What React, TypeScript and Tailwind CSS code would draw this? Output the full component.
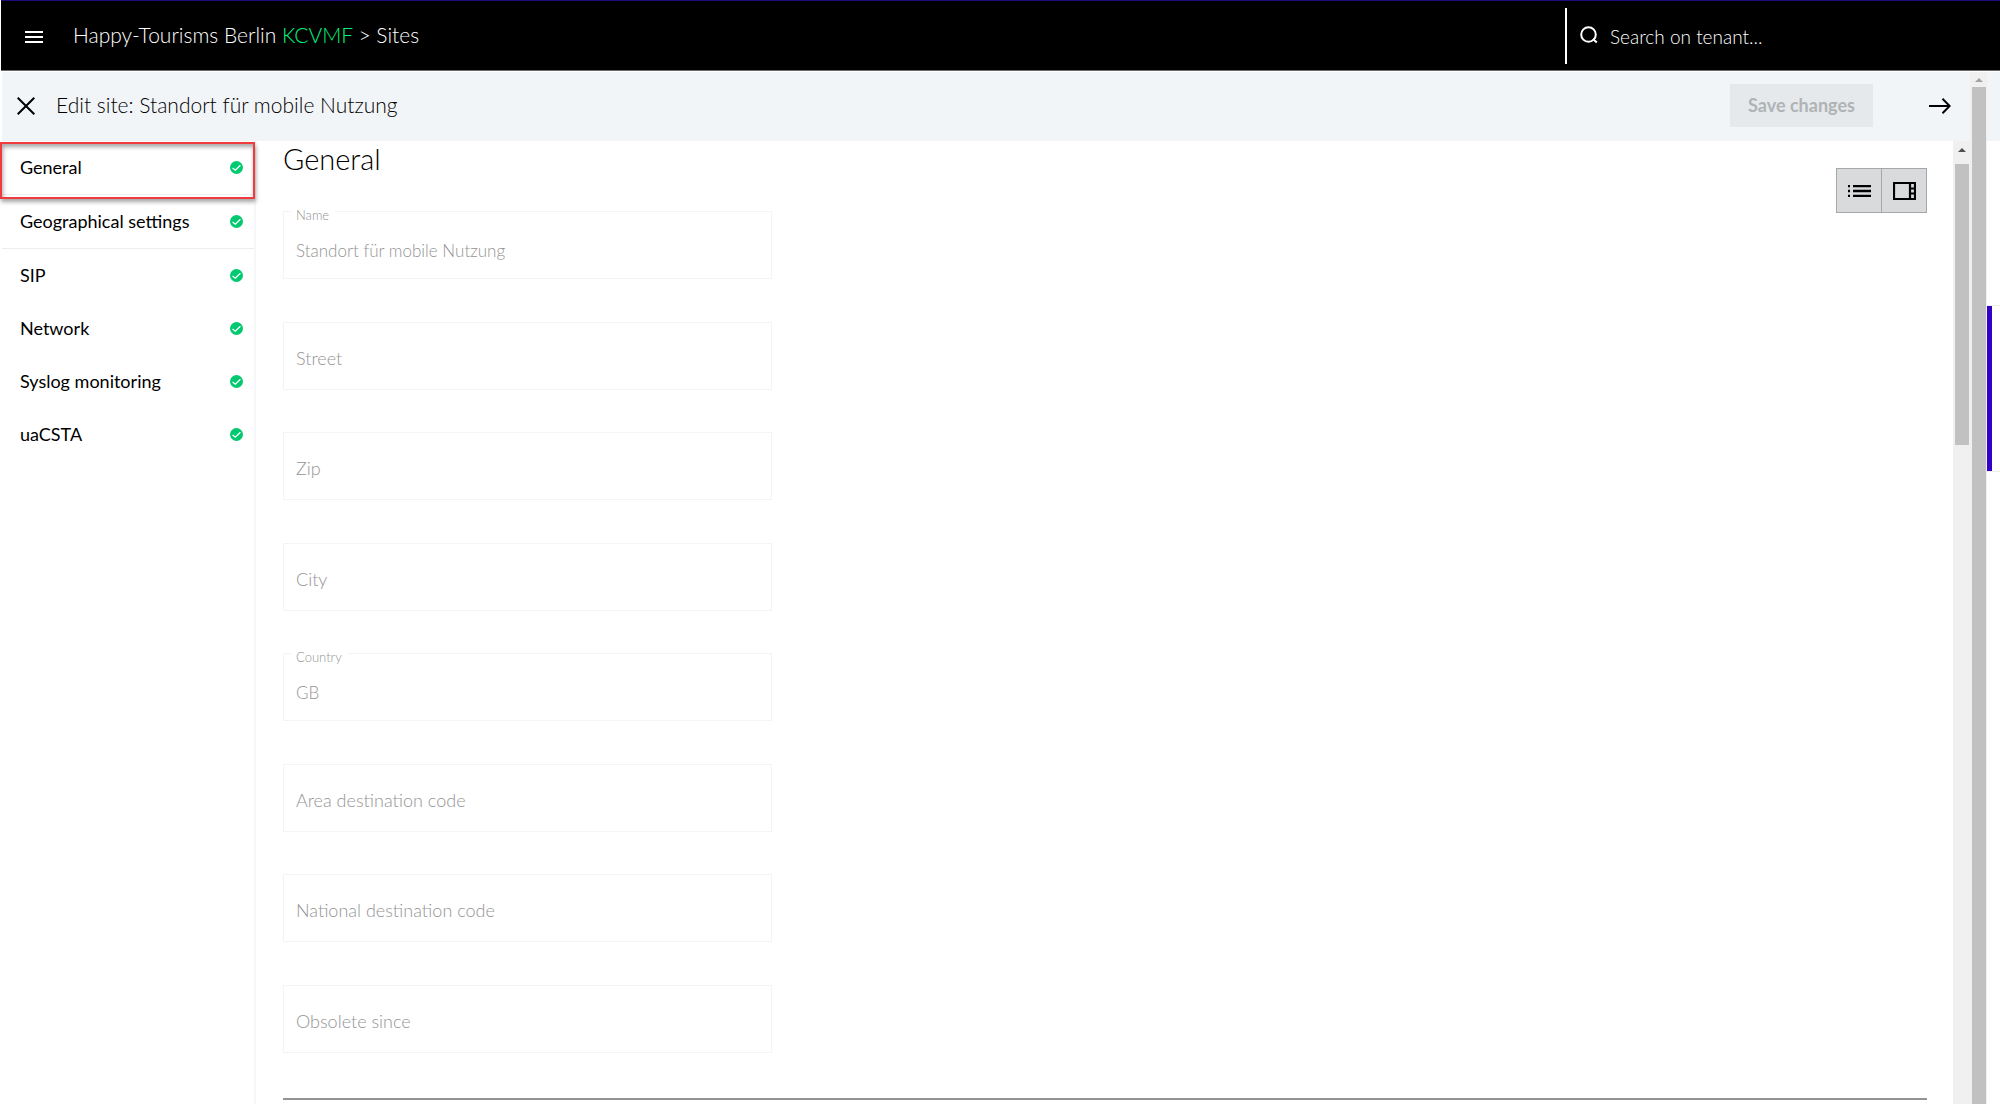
import React from "react";

const sections = [
  { label: "General", divided: true, active: true },
  { label: "Geographical settings", divided: true },
  { label: "SIP" },
  { label: "Network" },
  { label: "Syslog monitoring" },
  { label: "uaCSTA" },
];

const fields = [
  { id: "name", label: "Name", value: "Standort für mobile Nutzung" },
  { id: "street", label: "Street", value: "" },
  { id: "zip", label: "Zip", value: "" },
  { id: "city", label: "City", value: "" },
  { id: "country", label: "Country", value: "GB" },
  { id: "area", label: "Area destination code", value: "" },
  { id: "national", label: "National destination code", value: "" },
  { id: "obsolete", label: "Obsolete since", value: "" },
];

function CheckBadge() {
  return (
    <svg viewBox="0 0 13 13" className="size-[13px] shrink-0" role="img" aria-label="Valid">
      <circle cx="6.5" cy="6.5" r="6.5" fill="#00c96f" />
      <path d="M2.6 6.9 5.3 9.2 10.4 4.2" fill="none" stroke="#fff" strokeWidth="1.3" />
    </svg>
  );
}

function Field({ id, label, value }: { id: string; label: string; value: string }) {
  return (
    <div className="relative w-[489px]">
      <input
        id={id}
        disabled
        defaultValue={value}
        className="h-[68px] w-full border border-[#f3f4f5] bg-white px-3 pt-2.5 text-[17px] text-[#949494]"
      />
      <label
        htmlFor={id}
        className={
          value
            ? "absolute -top-1 left-2 bg-white pr-1.5 pl-[5px] text-[13px] leading-4 text-[#949494]"
            : "absolute top-6 left-[13px] text-lg leading-6 text-[#949494]"
        }
      >
        {label}
      </label>
    </div>
  );
}

function ScrollTop({ color }: { color: string }) {
  return (
    <svg viewBox="0 0 8 4" className="h-1 w-2" aria-hidden="true">
      <path d="M0 4 4 0l4 4z" fill={color} />
    </svg>
  );
}

export default function App() {
  return (
    <div className="flex min-h-screen flex-col bg-white font-['Lato',sans-serif] font-light text-black">
      <header className="ml-px flex h-[71px] items-center border-t border-b border-t-[#1f0a80] border-b-[#6b6b6b] bg-black text-white">
        <button aria-label="Menu" className="ml-6 flex w-[18px] flex-col gap-[3px] pt-0.5">
          <span className="h-0.5 w-full bg-white" />
          <span className="h-0.5 w-full bg-white" />
          <span className="h-0.5 w-full bg-white" />
        </button>
        <h1 className="ml-[30px] pb-0.5 text-[21px] leading-7">
          Happy-Tourisms Berlin <span className="text-[#00f57a]">KCVMF</span> &gt; Sites
        </h1>
        <div className="ml-auto flex h-14 w-[435px] items-center border-l-2 border-white pl-[13px]">
          <svg viewBox="0 0 18 18" className="mb-0.5 size-[18px] shrink-0" aria-hidden="true">
            <circle cx="8.5" cy="8.5" r="7.3" fill="none" stroke="#fff" strokeWidth="2" />
            <path d="m13 13 3.8 3.6" stroke="#fff" strokeWidth="2" />
          </svg>
          <input
            aria-label="Search on tenant"
            placeholder="Search on tenant..."
            className="ml-3 h-8 min-w-0 flex-1 bg-transparent pt-0.5 text-[19px] text-white outline-none placeholder:text-white"
          />
        </div>
      </header>

      <div className="flex flex-1 pt-px">
        <div className="flex min-w-0 flex-1 flex-col">
          <div className="ml-0.5 flex h-[69px] items-center bg-[#f2f5f8] pr-[19px] pb-0.5">
            <button aria-label="Close" className="ml-[15px] size-[18px]">
              <svg viewBox="0 0 18 18" className="size-[18px]">
                <path d="m.7.7 16.6 16.6M17.3.7.7 17.3" stroke="#000" strokeWidth="2" />
              </svg>
            </button>
            <h2 className="ml-[21px] pb-0.5 text-[21px] leading-7">Edit site: Standort für mobile Nutzung</h2>
            <button disabled className="ml-auto h-[43px] w-[143px] bg-[#e5e9ec] pb-0.5 text-lg font-bold text-[#b0b3b5]">
              Save changes
            </button>
            <button aria-label="Next" className="ml-14 h-4 w-[22px]">
              <svg viewBox="0 0 22 16" className="h-4 w-[22px]">
                <path d="M0 8h21M13.5.8 20.7 8l-7.2 7.2" fill="none" stroke="#000" strokeWidth="2" />
              </svg>
            </button>
          </div>

          <div className="flex flex-1">
            <nav className="w-64 border-r-2 border-[#f5f7f9] pl-0.5">
              {sections.map((s) => (
                <div key={s.label} className={s.divided ? "relative h-[54px] border-b border-[#eceef0]" : "h-[53px]"}>
                  <button className="flex size-full items-center justify-between pr-[11px] pl-[18px] text-lg font-normal">
                    <span className="pb-0.5">{s.label}</span>
                    <CheckBadge />
                  </button>
                  {s.active && (
                    <span className="pointer-events-none absolute top-px -right-px -left-0.5 h-[57px] border-2 border-[#f03c3c] shadow-[1px_3px_4px_rgba(0,0,0,0.35),inset_1px_3px_4px_rgba(0,0,0,0.35)]" />
                  )}
                </div>
              ))}
            </nav>

            <main className="relative flex min-w-0 flex-1 flex-col pr-[26px] pb-1 pl-[27px]">
              <h3 className="text-[29px] leading-9">General</h3>
              <form className="mt-[34px] mb-[45px] flex flex-1 flex-col justify-between gap-10">
                {fields.map((f) => (
                  <Field key={f.id} {...f} />
                ))}
              </form>
              <hr className="border-t-2 border-[#939393]" />
              <div className="absolute top-[27px] right-[26px] flex border border-[#a5a8ab] bg-[#d9dadc]">
                <button aria-label="List view" className="flex h-[43px] w-11 items-center justify-center">
                  <svg viewBox="0 0 23 12" className="h-3 w-[23px]">
                    <path d="M0 1h2M0 6h2M0 11h2M5 1h18M5 6h18M5 11h18" stroke="#000" strokeWidth="2.4" />
                  </svg>
                </button>
                <button
                  aria-label="Panel view"
                  className="flex h-[43px] w-[45px] items-center justify-center border-l border-[#a5a8ab]"
                >
                  <svg viewBox="0 0 23 18" className="h-[18px] w-[23px]">
                    <path d="M1 1h21v16H1zM17 1v16M17 6.5h5M17 11.5h5" fill="none" stroke="#000" strokeWidth="2.2" />
                  </svg>
                </button>
              </div>
            </main>

            <div aria-hidden="true" className="flex w-[17px] flex-col items-center bg-[#f0f0f0]">
              <div className="flex h-[23px] items-center pb-1.5">
                <ScrollTop color="#505050" />
              </div>
              <div className="h-[281px] w-3.5 bg-[#c1c1c1]" />
            </div>
          </div>
        </div>

        <div aria-hidden="true" className="flex w-[17px] flex-col items-center bg-[#f0f0f0]">
          <div className="flex h-[15px] items-center">
            <ScrollTop color="#a3a3a3" />
          </div>
          <div className="w-3.5 flex-1 bg-[#c1c1c1]" />
        </div>

        <div aria-hidden="true" className="w-[13px]">
          <div className="h-[69px] bg-[#f2f5f8]" />
          <div className="mt-[164px] h-[167px] border-y border-[#ececec]">
            <div className="h-full w-[5px] bg-[#3300c8]" />
          </div>
        </div>
      </div>
    </div>
  );
}
